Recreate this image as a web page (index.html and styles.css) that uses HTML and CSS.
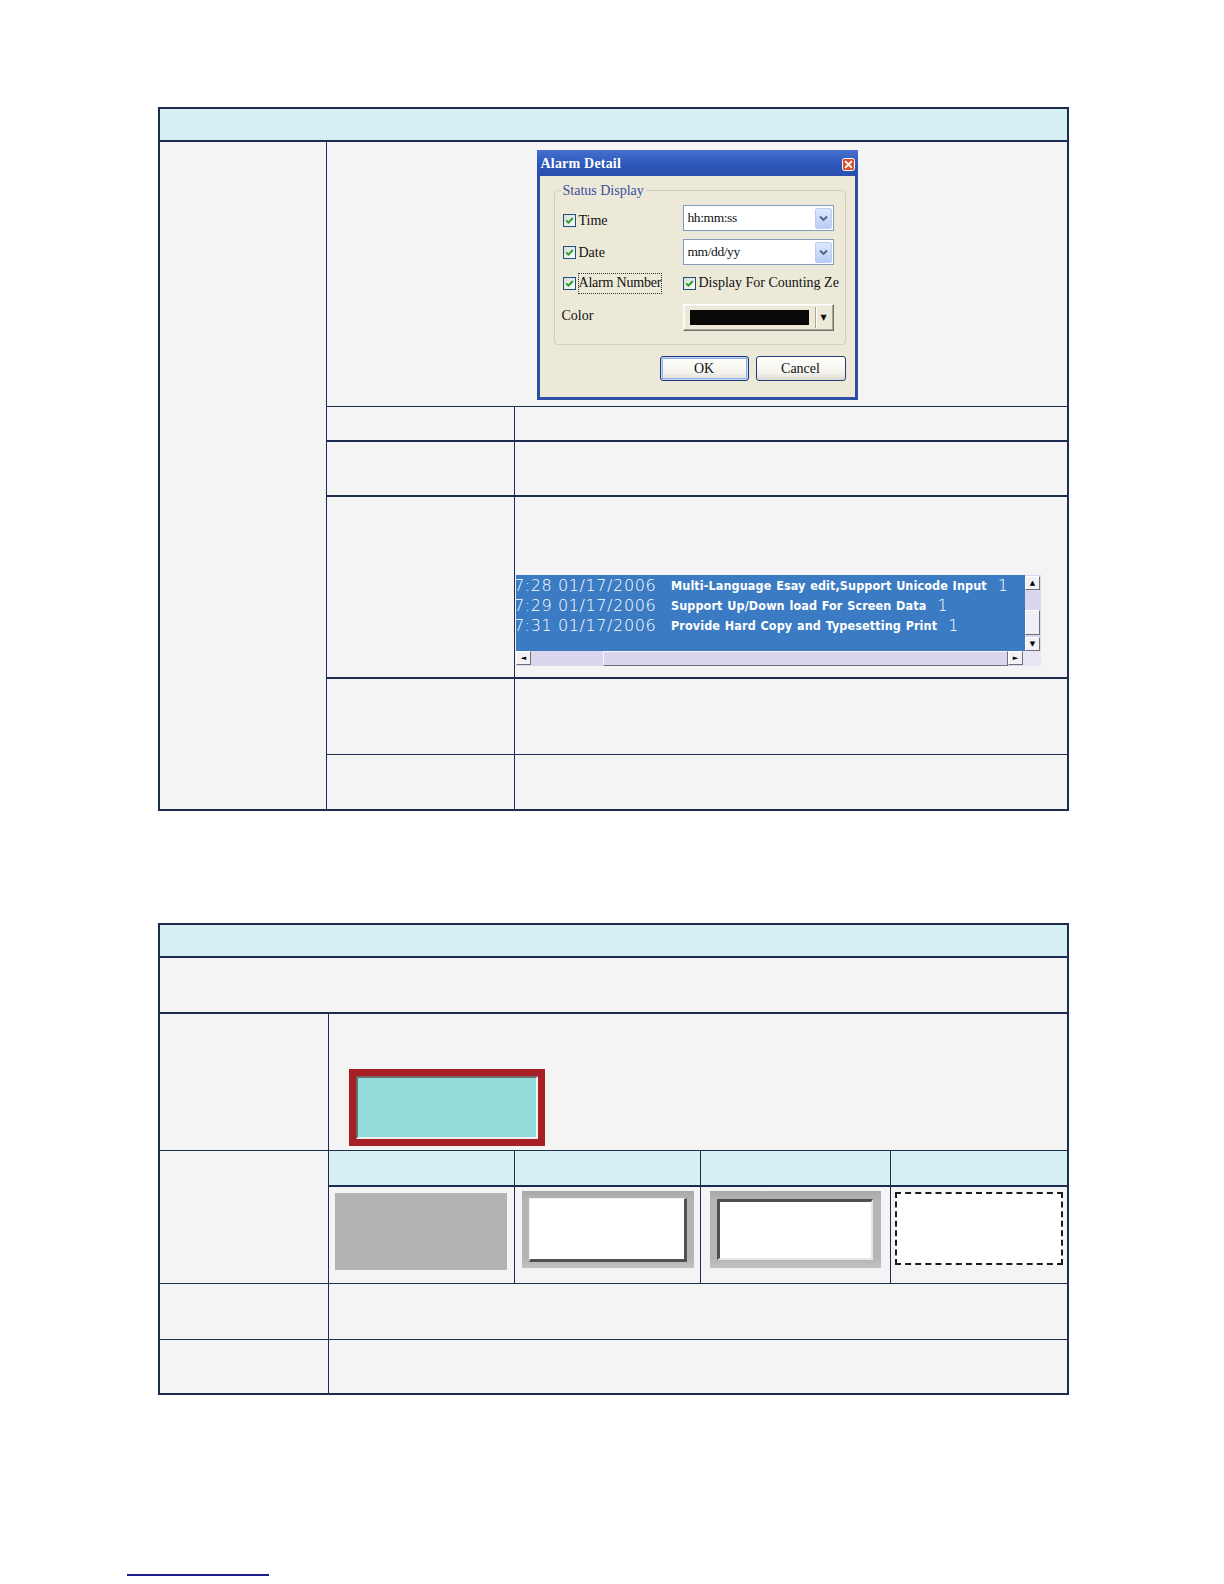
FILE: index.html
```html
<!DOCTYPE html>
<html>
<head>
<meta charset="utf-8">
<title>Alarm settings</title>
<link rel="stylesheet" href="styles.css">
</head>
<body>
<div class="page">

  <div class="t1">
    <div class="hd"></div>
    <div class="colA t1a"></div>
    <div class="shot bb1">
      <div class="dlg">
        <div class="dlg-title">
          <span class="dlg-name">Alarm Detail</span>
          <span class="dlg-x"><svg width="13" height="13" viewBox="0 0 13 13"><rect x="0.5" y="0.5" width="12" height="12" rx="2" fill="#d8502c" stroke="#fff" stroke-width="1"/><path d="M3.6 3.6 L9.4 9.4 M9.4 3.6 L3.6 9.4" stroke="#fff" stroke-width="1.8" stroke-linecap="round"/></svg></span>
        </div>
        <div class="dlg-body">
          <div class="grp">
            <div class="legend">Status Display</div>
            <div class="grp-grid">
              <div class="chk-item r1"><span class="chk"><svg width="11" height="11" viewBox="0 0 11 11"><path d="M2.2 5.4 L4.4 7.6 L8.8 3.0" fill="none" stroke="#21a121" stroke-width="1.9"/></svg></span><span>Time</span></div>
              <div class="combo"><span class="combo-val">hh:mm:ss</span><span class="combo-btn"><svg width="9" height="7" viewBox="0 0 9 7"><path d="M1 1.5 L4.5 5 L8 1.5" fill="none" stroke="#4d6185" stroke-width="1.8"/></svg></span></div>

              <div class="chk-item r2"><span class="chk"><svg width="11" height="11" viewBox="0 0 11 11"><path d="M2.2 5.4 L4.4 7.6 L8.8 3.0" fill="none" stroke="#21a121" stroke-width="1.9"/></svg></span><span>Date</span></div>
              <div class="combo"><span class="combo-val">mm/dd/yy</span><span class="combo-btn"><svg width="9" height="7" viewBox="0 0 9 7"><path d="M1 1.5 L4.5 5 L8 1.5" fill="none" stroke="#4d6185" stroke-width="1.8"/></svg></span></div>

              <div class="chk-item"><span class="chk"><svg width="11" height="11" viewBox="0 0 11 11"><path d="M2.2 5.4 L4.4 7.6 L8.8 3.0" fill="none" stroke="#21a121" stroke-width="1.9"/></svg></span><span class="focus">Alarm Number</span></div>
              <div class="chk-item"><span class="chk"><svg width="11" height="11" viewBox="0 0 11 11"><path d="M2.2 5.4 L4.4 7.6 L8.8 3.0" fill="none" stroke="#21a121" stroke-width="1.9"/></svg></span><span class="nowrap">Display For Counting Ze</span></div>

              <div class="color-lbl">Color</div>
              <div class="ccombo"><span class="swatch"></span><span class="csep"></span><span class="carrow">▼</span></div>
            </div>
          </div>
          <div class="btns">
            <span class="btn def">OK</span>
            <span class="btn">Cancel</span>
          </div>
        </div>
      </div>
    </div>

    <div class="cb br bb2"></div><div class="cc bb2"></div>
    <div class="cb br bb2"></div><div class="cc bb2"></div>
    <div class="cb br bb2"></div>
    <div class="cc bb2 listcell">
      <div class="lst">
        <div class="lst-main">
          <div class="lst-rows">
            <div class="lrow"><span class="ts">7:28 01/17/2006</span><span class="msg">Multi-Language Esay edit,Support Unicode Input</span><span class="cnt">1</span></div>
            <div class="lrow"><span class="ts">7:29 01/17/2006</span><span class="msg">Support Up/Down load For Screen Data</span><span class="cnt">1</span></div>
            <div class="lrow"><span class="ts">7:31 01/17/2006</span><span class="msg">Provide Hard Copy and Typesetting Print</span><span class="cnt">1</span></div>
          </div>
          <div class="vbar">
            <span class="sbtn up">▲</span>
            <span class="vtrack"><span class="vthumb"></span></span>
            <span class="sbtn dn">▼</span>
          </div>
        </div>
        <div class="hbar">
          <span class="sbtn lt">◄</span>
          <span class="htrack"><span class="hthumb"></span></span>
          <span class="sbtn rt">►</span>
          <span class="corner"></span>
        </div>
      </div>
    </div>
    <div class="cb br bb1"></div><div class="cc bb1"></div>
    <div class="cb br"></div><div class="cc"></div>
  </div>

  <div class="t2">
    <div class="hd"></div>
    <div class="full bb2"></div>

    <div class="a2 br bb1"></div>
    <div class="rest bb1 redcell">
      <div class="redbox"><div class="redin"></div></div>
    </div>

    <div class="a2 tall br bb1"></div>
    <div class="sub br"></div>
    <div class="sub br"></div>
    <div class="sub br"></div>
    <div class="sub"></div>

    <div class="smp br bb1 s1"><div class="flat"></div></div>
    <div class="smp br bb1 s2"><div class="raised"><div class="rin"></div></div></div>
    <div class="smp br bb1 s3"><div class="sunken"><div class="sin"></div></div></div>
    <div class="smp bb1 s4"><div class="dashed"></div></div>

    <div class="a2 br bb1"></div>
    <div class="rest bb1"></div>

    <div class="a2 br"></div>
    <div class="rest"></div>
  </div>

  <div class="footline"></div>
</div>
</body>
</html>
```

FILE: styles.css
```css
* { box-sizing: border-box; }

html, body {
  margin: 0;
  padding: 0;
  background: #ffffff;
}

body {
  font-family: "Liberation Serif", "DejaVu Serif", serif;
  --ln: #1d2d4f;
}

.page {
  padding: 107px 0 0 158px;
  height: 1584px;
}

/* ---------- table 1 ---------- */
.t1 {
  display: grid;
  width: 911px;
  border: 2px solid var(--ln);
  background: #f4f4f4;
  grid-template-columns: 167px 188px 552px;
  grid-template-rows: 33px 265px 35px 55px 182px 76px 54px;
}

.hd {
  grid-column: 1 / -1;
  background: #d5eff3;
  border-bottom: 2px solid var(--ln);
}

.t1a {
  grid-column: 1;
  grid-row: 2 / -1;
  border-right: 1px solid var(--ln);
}

.shot {
  grid-column: 2 / 4;
  display: flex;
  justify-content: center;
  padding: 8px 0 0 0;
}

.cb { grid-column: 2; }
.cc { grid-column: 3; }

.br { border-right: 1px solid var(--ln); }
.bb1 { border-bottom: 1px solid var(--ln); }
.bb2 { border-bottom: 2px solid var(--ln); }

/* ---------- dialog ---------- */
.dlg {
  width: 321px;
  height: 250px;
  border: 3px solid #2d4fa6;
  border-top: 0;
  background: #ece9d8;
  display: flex;
  flex-direction: column;
  font-size: 14px;
  color: #111;
}

.dlg-title {
  height: 26px;
  margin: 0 -3px;
  padding: 0 3px 0 4px;
  background: linear-gradient(#4570cf, #2b55b8 60%, #2a50ad);
  display: flex;
  align-items: center;
  justify-content: space-between;
}

.dlg-name {
  color: #fff;
  font-weight: bold;
  font-size: 14px;
  letter-spacing: 0.2px;
  padding-top: 2px;
}

.dlg-x {
  display: flex;
  margin-top: 3px;
}

.dlg-body {
  flex: 1;
  padding: 14px 9px 0 14px;
  display: flex;
  flex-direction: column;
}

.grp {
  height: 155px;
  border: 1px solid #d0cfbf;
  border-radius: 4px;
  padding: 0 0 0 8px;
}

.legend {
  width: fit-content;
  height: 15px;
  line-height: 15px;
  margin: -8px 0 0 -2px;
  padding: 0 2px;
  background: #ece9d8;
  color: #3a4e9e;
  font-size: 14px;
}

.grp-grid {
  margin-top: 7px;
  display: grid;
  grid-template-columns: 120px 151px;
  grid-template-rows: 26px 26px 20px 27px;
  row-gap: 8px;
  align-items: center;
}

.chk-item {
  display: flex;
  align-items: center;
  gap: 3px;
  white-space: nowrap;
}

.chk-item.r1 { padding-top: 5px; }
.chk-item.r2 { padding-top: 1px; }

.chk {
  width: 13px;
  height: 13px;
  border: 1px solid #1c5180;
  background: linear-gradient(135deg, #dcdcd7, #fbfbf9);
  display: flex;
  align-items: center;
  justify-content: center;
  flex: none;
}

.focus {
  outline: 1px dotted #333;
  outline-offset: 0;
  padding: 1px 0 2px;
  letter-spacing: -0.2px;
}

.nowrap { white-space: nowrap; }

.combo {
  height: 26px;
  border: 1px solid #7f9db9;
  background: #fff;
  display: flex;
  align-items: center;
  justify-content: space-between;
  padding: 0 1px 0 4px;
}

.combo-val {
  font-size: 13.5px;
  letter-spacing: -0.4px;
}

.combo-btn {
  width: 17px;
  height: 21px;
  border: 1px solid #bccdf5;
  border-radius: 2px;
  background: linear-gradient(#dde7fd, #b9cdf6);
  display: flex;
  align-items: center;
  justify-content: center;
}

.color-lbl {
  margin-top: 3px;
  margin-left: -1px;
}

.ccombo {
  margin-top: 6px;
  height: 27px;
  border: 1px solid;
  border-color: #fff #6e6e6e #6e6e6e #fff;
  box-shadow: inset -1px -1px 0 #a9a797, inset 1px 1px 0 #f6f5ee;
  display: flex;
  align-items: center;
  padding-left: 6px;
}

.swatch {
  width: 119px;
  height: 15px;
  background: #080808;
}

.csep {
  width: 1px;
  height: 21px;
  margin-left: 6px;
  background: #a8a698;
  box-shadow: 1px 0 0 #fff;
}

.carrow {
  font-size: 8px;
  margin-left: 5px;
  font-family: "DejaVu Sans", sans-serif;
}

.btns {
  margin-top: 11px;
  display: flex;
  justify-content: flex-end;
  gap: 7px;
}

.btn {
  width: 89px;
  height: 25px;
  border: 1px solid #1f3c78;
  border-radius: 3px;
  background: linear-gradient(#ffffff, #f3f2ec 70%, #dcd8cc);
  display: flex;
  align-items: center;
  justify-content: center;
  font-size: 14px;
}

.btn + .btn { width: 90px; }

.btn.def {
  box-shadow: inset 0 0 0 1px #c5d5f5, inset 0 0 0 2px #8fb0ea;
}

/* ---------- list ---------- */
.listcell {
  padding: 78px 0 0 1px;
}

.lst {
  width: 525px;
  height: 91px;
  display: flex;
  flex-direction: column;
}

.lst-main {
  height: 76px;
  display: flex;
}

.lst-rows {
  flex: 1;
  background: #3b7bc3;
  color: #fff;
  overflow: hidden;
}

.lrow {
  height: 20px;
  display: flex;
  align-items: center;
  white-space: nowrap;
}

.ts {
  width: 157px;
  flex: none;
  margin-left: -2px;
  font-family: "DejaVu Sans", sans-serif;
  font-weight: 200;
  font-size: 16px;
  letter-spacing: 0.6px;
}

.msg {
  font-family: "Liberation Sans Narrow", "DejaVu Sans Condensed", "Liberation Sans", sans-serif;
  font-weight: bold;
  font-size: 12.5px;
  letter-spacing: 0.1px;
  word-spacing: 0.7px;
}

.cnt {
  margin-left: 11px;
  font-family: "DejaVu Sans", sans-serif;
  font-weight: 200;
  font-size: 16px;
}

.vbar {
  width: 16px;
  background: #d9d6ee;
  display: flex;
  flex-direction: column;
  padding: 1px 0 0;
}

.sbtn {
  width: 15px;
  height: 14px;
  background: #f2f1f6;
  border: 1px solid;
  border-color: #fff #6f6f7a #6f6f7a #fff;
  color: #000;
  font-size: 7px;
  line-height: 12px;
  text-align: center;
  font-family: "DejaVu Sans", sans-serif;
  flex: none;
}

.vtrack {
  flex: 1;
  display: flex;
  flex-direction: column;
  justify-content: flex-end;
  padding-bottom: 2px;
}

.vthumb {
  height: 25px;
  width: 15px;
  background: #efeff5;
  border: 1px solid;
  border-color: #fff #6f6f7a #6f6f7a #fff;
}

.hbar {
  height: 15px;
  display: flex;
  background: #d9d6ee;
}

.htrack {
  width: 477px;
  display: flex;
  padding-left: 72px;
}

.hthumb {
  flex: 1;
  background: #d9d6ee;
  border: 1px solid;
  border-color: #f6f6fb #6f6f7a #6f6f7a #f6f6fb;
}

.corner {
  flex: 1;
  background: #e8e6f2;
}

/* ---------- table 2 ---------- */
.t2 {
  margin-top: 112px;
  display: grid;
  width: 911px;
  border: 2px solid var(--ln);
  background: #f4f4f4;
  grid-template-columns: 169px 186px 186px 190px 176px;
  grid-template-rows: 33px 56px 137px 36px 97px 56px 53px;
}

.full { grid-column: 1 / -1; }
.a2 { grid-column: 1; }
.a2.tall { grid-row: 4 / 6; }
.rest { grid-column: 2 / -1; }

.sub {
  background: #d5eff3;
  border-bottom: 2px solid var(--ln);
}

.redcell {
  padding: 55px 0 0 20px;
}

.redbox {
  width: 196px;
  height: 77px;
  background: #a51f25;
  padding: 7px;
}

.redin {
  height: 100%;
  background: #94dcdb;
  border-top: 2px solid #6b6b6b;
  border-left: 2px solid #6b6b6b;
  border-right: 2px solid #f2f2f2;
  border-bottom: 2px solid #f2f2f2;
}

.smp { display: flex; }
.s1 { padding: 6px 0 0 6px; }
.s2 { padding: 4px 0 0 7px; }
.s3 { padding: 4px 0 0 9px; }
.s4 { padding: 5px 0 0 4px; }

.flat {
  width: 172px;
  height: 77px;
  background: #b3b3b2;
}

.raised {
  width: 172px;
  height: 77px;
  background: linear-gradient(#a9a9a9, #b5b5b5 12%, #b5b5b5 88%, #c2c2c2);
  padding: 7px 7px 6px 7px;
}

.rin {
  height: 100%;
  background: #fff;
  border-top: 1px solid #f0f0f0;
  border-left: 1px solid #f0f0f0;
  border-right: 3px solid #505050;
  border-bottom: 3px solid #505050;
}

.sunken {
  width: 171px;
  height: 77px;
  background: linear-gradient(#a9a9a9, #b5b5b5 12%, #b5b5b5 88%, #c2c2c2);
  padding: 8px 8px 8px 7px;
}

.sin {
  height: 100%;
  background: #fff;
  border-top: 3px solid #505050;
  border-left: 3px solid #505050;
  border-right: 2px solid #e6e6e6;
  border-bottom: 2px solid #e6e6e6;
}

.dashed {
  width: 168px;
  height: 73px;
  background: #fff;
  border: 2px dashed #1c1c1c;
}

.footline {
  margin: 179px 0 0 -31px;
  width: 142px;
  height: 2px;
  background: #1c1c8c;
}
```
